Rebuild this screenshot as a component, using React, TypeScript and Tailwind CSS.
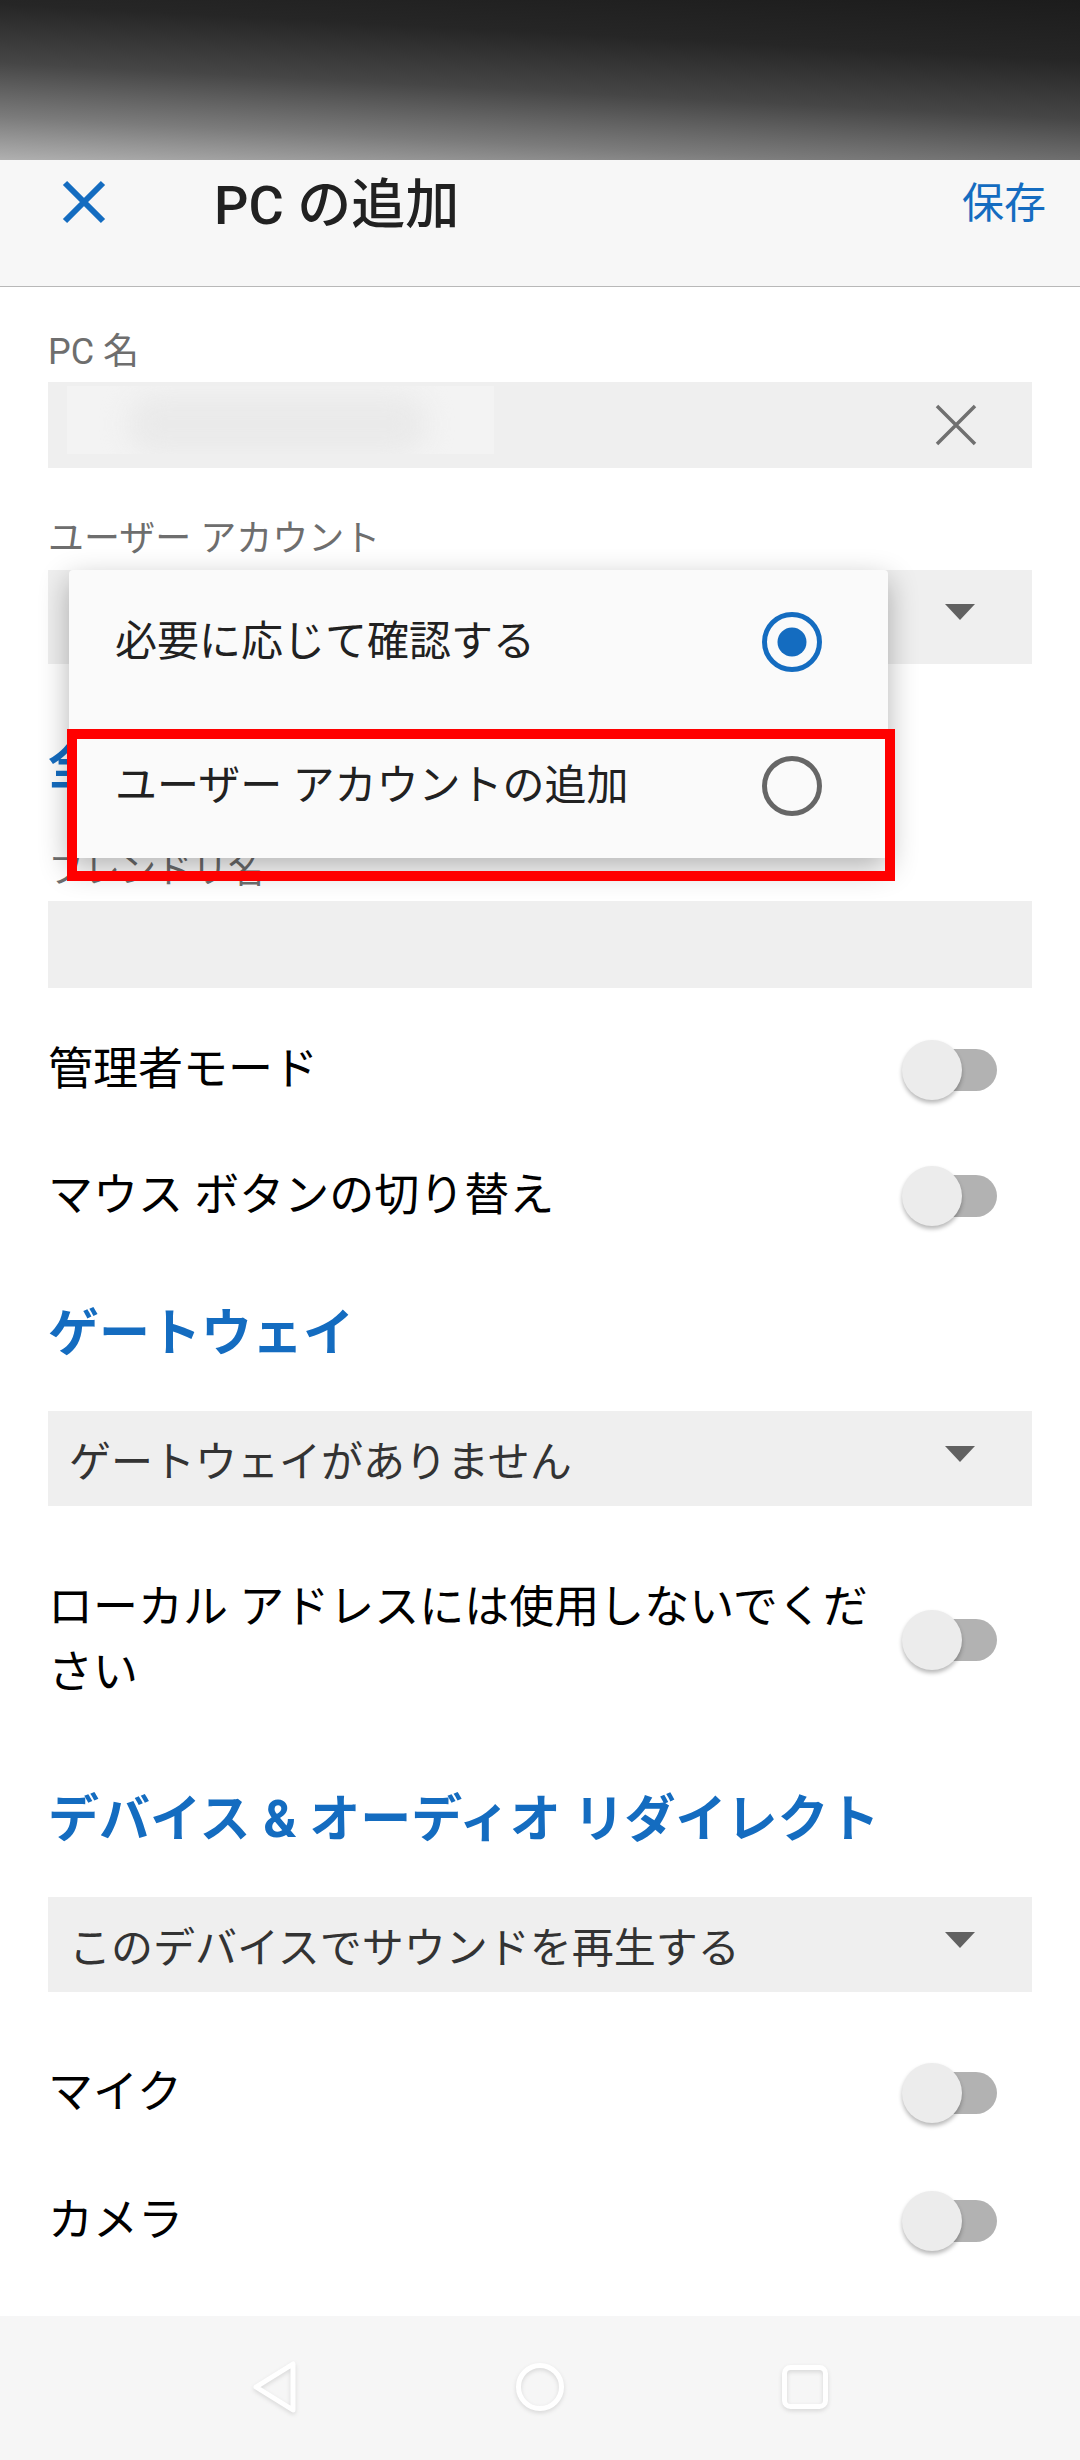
import React from "react";

const BLUE = "#146cc0";

function Toggle() {
  return (
    <div className="relative mr-[35px] h-[62px] w-[100px] shrink-0">
      <div className="absolute right-0 top-[10px] h-[42px] w-[88px] rounded-full bg-[#b2b2b2]" />
      <div className="absolute left-[5px] top-[1px] h-[60px] w-[60px] rounded-full bg-[#ececec] shadow-[0_3px_4px_rgba(0,0,0,0.28)]" />
    </div>
  );
}

function Caret() {
  return (
    <svg width="30" height="16" viewBox="0 0 30 16" className="mb-[10px] shrink-0">
      <polygon points="0,0 30,0 15,16" fill="#616161" />
    </svg>
  );
}

function Select({ text, h = "h-[95px]" }: { text: string; h?: string }) {
  return (
    <div className={`${h} flex items-center justify-between bg-[#efefef] pl-[21px] pr-[57px]`}>
      <span className="mt-[9px] text-[42px] leading-[50px] text-[#333333]">{text}</span>
      <Caret />
    </div>
  );
}

function Row({ label }: { label: string }) {
  return (
    <div className="flex h-[126px] items-center">
      <span className="flex-1 text-[45px] leading-[56px] text-black">{label}</span>
      <Toggle />
    </div>
  );
}

function Label({ text, className = "" }: { text: string; className?: string }) {
  return <div className={`text-[36px] leading-[40px] text-[#6e6e6e] ${className}`}>{text}</div>;
}

function Section({ text, className = "" }: { text: string; className?: string }) {
  return (
    <div className={`text-[51px] font-bold leading-[56px] text-[#146cc0] ${className}`}>{text}</div>
  );
}

function Radio({ on }: { on?: boolean }) {
  return (
    <svg width="60" height="60" viewBox="0 0 60 60" className="shrink-0">
      <circle cx="30" cy="30" r="27.5" fill="none" stroke={on ? BLUE : "#666666"} strokeWidth="5" />
      {on && <circle cx="30" cy="30" r="14.5" fill={BLUE} />}
    </svg>
  );
}

export default function App() {
  return (
    <div className="relative flex h-[2460px] w-[1080px] flex-col overflow-hidden bg-white font-['Roboto','Noto_Sans_CJK_JP',sans-serif]">
      {/* status bar */}
      <div className="h-[160px] shrink-0 bg-[linear-gradient(183deg,#1c1c1c_0%,#262626_28%,#464646_55%,#7b7b7b_80%,#b0b0b0_100%)]" />

      {/* header */}
      <div className="h-[127px] shrink-0 border-b border-[#b8b8b8] bg-[#f7f7f7]">
        <div className="flex h-[84px] items-center">
          <svg width="44" height="44" viewBox="0 0 44 44" className="ml-[62px] shrink-0">
            <path d="M3 3 L41 41 M41 3 L3 41" stroke={BLUE} strokeWidth="6" fill="none" />
          </svg>
          <span className="ml-[108px] mt-[8px] text-[54px] font-medium leading-[60px] text-[#212121]">
            PC の追加
          </span>
          <span className="ml-auto mr-[34px] mt-[4px] text-[42px] leading-[50px] text-[#146cc0]">保存</span>
        </div>
      </div>

      {/* form */}
      <div className="flex-1 px-[48px]">
        <Label text="PC 名" className="mt-[45px]" />
        <div className="mt-[10px] flex h-[86px] items-start bg-[#efefef] pl-[19px] pt-[4px]">
          <div className="relative h-[68px] w-[427px] overflow-hidden bg-[#f3f3f3]">
            <div className="absolute left-[60px] top-[8px] h-[60px] w-[300px] rounded-full bg-[#eaeaea] blur-[12px]" />
          </div>
          <svg width="42" height="42" viewBox="0 0 42 42" className="ml-auto mr-[55px] mt-[18px]">
            <path d="M2 2 L40 40 M40 2 L2 40" stroke="#707070" strokeWidth="3.5" fill="none" />
          </svg>
        </div>

        <Label text="ユーザー アカウント" className="mt-[51px]" />
        <div className="mt-[11px]">
          <Select text="必要に応じて確認する" h="h-[94px]" />
        </div>

        <Section text="全般" className="mt-[75px]" />
        <Label text="フレンドリ名" className="mt-[56px]" />
        <div className="mt-[10px] h-[87px] bg-[#efefef]" />

        <div className="mt-[19px]">
          <Row label="管理者モード" />
          <Row label="マウス ボタンの切り替え" />
        </div>

        <Section text="ゲートウェイ" className="mt-[47px]" />
        <div className="mt-[49px]">
          <Select text="ゲートウェイがありません" />
        </div>

        <div className="mt-[69px] flex items-center">
          <span className="min-w-0 flex-1 text-[45px] leading-[65px] text-black">
            ローカル アドレスには使用しないでください
          </span>
          <Toggle />
        </div>

        <Section text="デバイス & オーディオ リダイレクト" className="mt-[87px]" />
        <div className="mt-[49px]">
          <Select text="このデバイスでサウンドを再生する" />
        </div>

        <div className="mt-[37px]">
          <div className="flex h-[128px] items-center">
            <span className="flex-1 text-[45px] leading-[56px] text-black">マイク</span>
            <Toggle />
          </div>
          <div className="flex h-[128px] items-center">
            <span className="flex-1 text-[45px] leading-[56px] text-black">カメラ</span>
            <Toggle />
          </div>
        </div>
      </div>

      {/* nav bar */}
      <div className="flex h-[144px] shrink-0 items-center justify-center gap-[214px] bg-[#f6f6f6] pb-[2px]">
        <svg width="50" height="54" viewBox="0 0 50 54" className="drop-shadow-[0_2px_2px_rgba(0,0,0,0.12)]">
          <path d="M43 4 L43 50 L6 27 Z" fill="none" stroke="#ffffff" strokeWidth="5" strokeLinejoin="round" />
        </svg>
        <svg width="52" height="52" viewBox="0 0 52 52" className="drop-shadow-[0_2px_2px_rgba(0,0,0,0.12)]">
          <ellipse cx="26" cy="26" rx="21.5" ry="21.5" fill="none" stroke="#ffffff" strokeWidth="5" />
        </svg>
        <svg width="50" height="48" viewBox="0 0 50 48" className="drop-shadow-[0_2px_2px_rgba(0,0,0,0.12)]">
          <rect x="4.5" y="4.5" width="41" height="39" rx="6" fill="none" stroke="#ffffff" strokeWidth="5" />
        </svg>
      </div>

      {/* dropdown menu overlay */}
      <div className="absolute left-[69px] top-[570px] w-[819px] rounded-[4px] bg-[#fafafa] shadow-[0_10px_30px_rgba(0,0,0,0.3)]">
        <div className="flex h-[144px] items-center pl-[46px] pr-[66px]">
          <span className="flex-1 text-[42px] leading-[50px] text-[#212121]">必要に応じて確認する</span>
          <Radio on />
        </div>
        <div className="flex h-[144px] items-center pl-[46px] pr-[66px]">
          <span className="flex-1 text-[42px] leading-[50px] text-[#212121]">ユーザー アカウントの追加</span>
          <Radio />
        </div>
      </div>

      {/* highlight box */}
      <div className="absolute left-[67px] top-[729px] h-[152px] w-[828px] border-[10px] border-[#ff0000]" />
    </div>
  );
}
